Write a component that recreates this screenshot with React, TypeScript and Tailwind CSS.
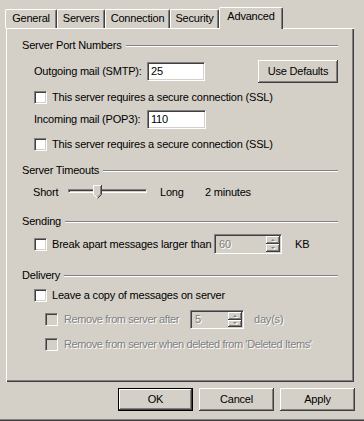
import React from 'react';

const sunken =
  'border border-t-[#808080] border-l-[#808080] border-b-white border-r-white shadow-[inset_1px_1px_0_#404040,inset_-1px_-1px_0_#d4d0c8]';
const raised = 'shadow-[inset_-1px_-1px_0_#404040,inset_1px_1px_0_#ffffff,inset_-2px_-2px_0_#808080]';
const disabledText = 'text-[#808080] [text-shadow:1px_1px_0_#ffffff]';

const CheckBox: React.FC<{ disabled?: boolean }> = ({ disabled }) => (
  <span className={`block w-[13px] h-[13px] shrink-0 ${sunken} ${disabled ? 'bg-[#d4d0c8]' : 'bg-white'}`} />
);

const GroupHeader: React.FC<{ title: string; className?: string }> = ({ title, className }) => (
  <div className={`flex items-center h-[13px] ${className || ''}`}>
    <span className="leading-[13px] whitespace-nowrap">{title}</span>
    <span className="flex-1 ml-[4px] h-[2px] border-t border-t-[#808080] border-b border-b-white" />
  </div>
);

const Arrow: React.FC<{ up?: boolean }> = ({ up }) => (
  <svg width="6" height="4" viewBox="0 0 6 4" className="block">
    {up ? (
      <>
        <polygon points="1,3 5,3 3,1" fill="#ffffff" transform="translate(1,1)" />
        <polygon points="1,3 5,3 3,1" fill="#808080" />
      </>
    ) : (
      <>
        <polygon points="1,1 5,1 3,3" fill="#ffffff" transform="translate(1,1)" />
        <polygon points="1,1 5,1 3,3" fill="#808080" />
      </>
    )}
  </svg>
);

const Spinner: React.FC<{ value: string; className: string }> = ({ value, className }) => (
  <div className={`flex shrink-0 bg-[#d4d0c8] p-[1px] ${sunken} ${className}`}>
    <span className={`flex-1 pl-[3px] flex items-center ${disabledText}`}>{value}</span>
    <div className="flex flex-col w-[14px] shrink-0">
      <div className={`flex-1 flex items-center justify-center ${raised}`}>
        <Arrow up />
      </div>
      <div className={`flex-1 flex items-center justify-center ${raised}`}>
        <Arrow />
      </div>
    </div>
  </div>
);

const Tab: React.FC<{ label: string; w: string; selected?: boolean }> = ({ label, w, selected }) => (
  <div
    className={`${w} ${
      selected ? 'h-[22px] -mb-[1px] relative z-10 pb-[4px]' : 'h-[19px] pb-[1px]'
    } shrink-0 flex items-center justify-center bg-[#d4d0c8] border-l border-t border-r border-l-white border-t-white border-r-[#404040] rounded-tl-[2px] rounded-tr-[2px] shadow-[inset_-1px_0_0_#808080]`}
  >
    {label}
  </div>
);

const Button: React.FC<{ label: string; className: string; isDefault?: boolean }> = ({ label, className, isDefault }) => (
  <div
    className={`shrink-0 h-[23px] flex items-center justify-center bg-[#d4d0c8] ${
      isDefault ? 'border border-black' : ''
    } ${className}`}
  >
    <div className={`w-full h-full flex items-center justify-center ${raised}`}>{label}</div>
  </div>
);

export default function App() {
  return (
    <div className="w-[364px] h-[421px] bg-[#d4d0c8] text-black text-[11px] leading-[13px] tracking-[-0.2px] whitespace-nowrap font-['Liberation_Sans',Arial,sans-serif] flex flex-col overflow-hidden select-none">
      <div className="flex items-end h-[28px] pl-[5px]">
        <Tab label="General" w="w-[52px]" />
        <Tab label="Servers" w="w-[48px]" />
        <Tab label="Connection" w="w-[65px]" />
        <Tab label="Security" w="w-[49px]" />
        <Tab label="Advanced" w="w-[64px]" selected />
      </div>

      <div className="ml-[6px] w-[348px] h-[354px] shrink-0 border-l border-t border-l-white border-t-white shadow-[inset_-1px_-1px_0_#404040,inset_-2px_-2px_0_#808080] pl-[15px] pr-[16px] pt-[10px] flex flex-col">
        <GroupHeader title="Server Port Numbers" />

        <div className="mt-[8px] ml-[12px] flex items-center h-[23px]">
          <span className="w-[113px] shrink-0">Outgoing mail (SMTP):</span>
          <div className={`w-[59px] h-[19px] bg-white flex items-center pl-[3px] ${sunken}`}>25</div>
          <Button label="Use Defaults" className="ml-[53px] w-[80px]" />
        </div>

        <div className="mt-[8px] ml-[12px] flex items-center gap-[5px] h-[13px]">
          <CheckBox />
          <span>This server requires a secure connection (SSL)</span>
        </div>

        <div className="mt-[6px] ml-[12px] flex items-center h-[19px]">
          <span className="w-[113px] shrink-0">Incoming mail (POP3):</span>
          <div className={`w-[59px] h-[19px] bg-white flex items-center pl-[3px] ${sunken}`}>110</div>
        </div>

        <div className="mt-[9px] ml-[12px] flex items-center gap-[5px] h-[13px]">
          <CheckBox />
          <span>This server requires a secure connection (SSL)</span>
        </div>

        <GroupHeader title="Server Timeouts" className="mt-[13px]" />

        <div className="mt-[8px] ml-[11px] flex items-center h-[14px]">
          <span className="w-[35px] shrink-0">Short</span>
          <div className="relative w-[79px] h-[14px] shrink-0">
            <div className="mt-[4px] h-[4px] w-full border-t border-l border-t-[#808080] border-l-[#808080] border-b border-r border-b-white border-r-white shadow-[inset_1px_1px_0_#404040]" />
            <svg width="9" height="14" viewBox="0 0 9 14" className="absolute left-[25px] top-0">
              <polygon points="0,0 9,0 9,9.5 4.5,14 0,9.5" fill="#d4d0c8" />
              <path d="M0.5 9.5 V0.5 H8" stroke="#ffffff" fill="none" />
              <path d="M0.5 9.5 L4.5 13.5" stroke="#ffffff" fill="none" />
              <path d="M8.5 0 V9.5 L4.5 13.5" stroke="#404040" fill="none" />
              <path d="M7.5 1 V9 L4.5 12" stroke="#808080" fill="none" />
            </svg>
          </div>
          <span className="ml-[13px] w-[45px] shrink-0">Long</span>
          <span>2 minutes</span>
        </div>

        <GroupHeader title="Sending" className="mt-[16px]" />

        <div className="mt-[6px] ml-[12px] flex items-center h-[20px]">
          <CheckBox />
          <span className="ml-[5px] w-[162px] shrink-0">Break apart messages larger than</span>
          <Spinner value="60" className="w-[68px] h-[20px]" />
          <span className="ml-[13px]">KB</span>
        </div>

        <GroupHeader title="Delivery" className="mt-[15px]" />

        <div className="mt-[7px] ml-[12px] flex items-center gap-[5px] h-[13px]">
          <CheckBox />
          <span>Leave a copy of messages on server</span>
        </div>

        <div className="mt-[8px] ml-[23px] flex items-center h-[19px]">
          <CheckBox disabled />
          <span className={`ml-[6px] w-[126px] shrink-0 tracking-[-0.4px] ${disabledText}`}>Remove from server after</span>
          <Spinner value="5" className="w-[54px] h-[19px]" />
          <span className={`ml-[10px] ${disabledText}`}>day(s)</span>
        </div>

        <div className="mt-[9px] ml-[23px] flex items-center h-[13px]">
          <CheckBox disabled />
          <span className={`ml-[6px] tracking-[-0.4px] ${disabledText}`}>Remove from server when deleted from 'Deleted Items'</span>
        </div>
      </div>

      <div className="mt-[6px] flex items-center">
        <Button label="OK" className="ml-[118px] w-[75px]" isDefault />
        <Button label="Cancel" className="ml-[6px] w-[75px]" />
        <Button label="Apply" className="ml-[6px] w-[75px]" />
      </div>

      <div className="mt-auto h-[2px] border-t border-t-[#808080] bg-[#404040]" />
    </div>
  );
}
